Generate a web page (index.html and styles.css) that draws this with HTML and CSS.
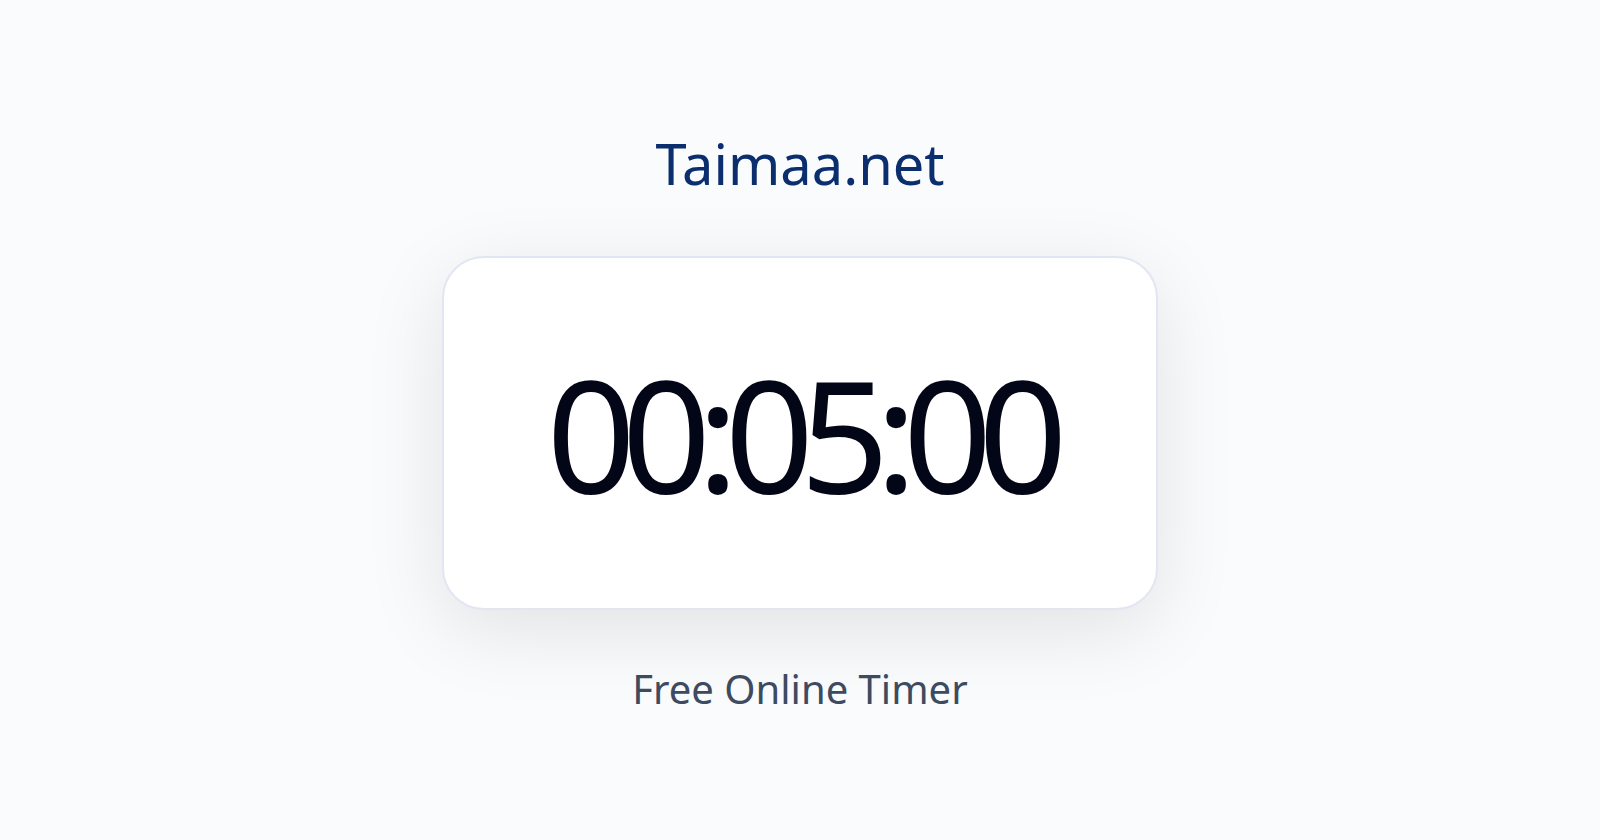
FILE: index.html
```html
<!DOCTYPE html>
<html lang="en">
<head>
  <meta charset="UTF-8">
  <meta name="viewport" content="width=device-width, initial-scale=1.0">
  <title>Taimaa.net</title>
  <link rel="stylesheet" href="styles.css">
</head>
<body>
  <main class="hero">
    <h1 class="site-name">Taimaa.net</h1>
    <div class="timer-card">
      <div class="timer-value" role="timer">00:05:00</div>
    </div>
    <p class="tagline">Free Online Timer</p>
  </main>
</body>
</html>
```

FILE: styles.css
```css
* {
  box-sizing: border-box;
}

body {
  margin: 0;
  font-family: 'Noto Sans', sans-serif;
  background: #f9fbfd;
}

.hero {
  display: flex;
  flex-direction: column;
  align-items: center;
  justify-content: center;
  min-height: 100vh;
}

.site-name {
  margin: 0 0 53px;
  font-size: 56px;
  font-weight: 400;
  line-height: 80px;
  color: #0b2e6f;
}

.timer-card {
  padding: 64px 102px;
  border: 2px solid #e2e6f2;
  border-radius: 42px;
  background: #ffffff;
  box-shadow: 0 20px 80px rgba(0, 0, 0, 0.1);
}

.timer-value {
  font-size: 156px;
  line-height: 222px;
  letter-spacing: -14px;
  color: #020617;
}

.tagline {
  margin: 51px 0 0;
  font-size: 40px;
  line-height: 56px;
  color: #3d4a60;
}
```
